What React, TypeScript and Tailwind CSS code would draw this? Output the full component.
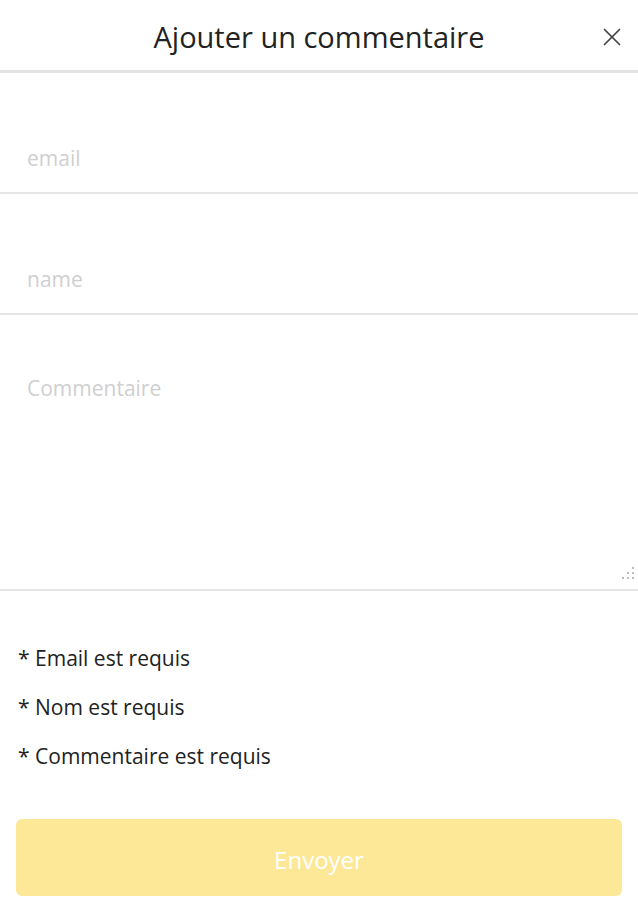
import React from 'react';
import { X } from 'lucide-react';

const App: React.FC = () => {
    return (
        <div className="w-[638px] h-[900px] bg-white text-[#222] font-['Open_Sans',sans-serif]">
            {/* Header */}
            <div className="h-[73px] flex items-center justify-center relative border-b-[3px] border-[#e3e3e3]">
                <h1 className="text-[29px] pt-[4px]">Ajouter un commentaire</h1>
                <button className="absolute right-[11px] top-[22px] text-[#444]">
                    <X size={30} strokeWidth={1.4} />
                </button>
            </div>

            {/* Fields */}
            <div className="flex flex-col">
                <input
                    placeholder="email"
                    className="h-[121px] pt-[50px] px-[27px] text-[21px] border-b-2 border-[#e6e6e6] outline-none placeholder:text-[#cfcfcf]"
                />
                <input
                    placeholder="name"
                    className="h-[121px] pt-[50px] px-[27px] text-[21px] border-b-2 border-[#e6e6e6] outline-none placeholder:text-[#cfcfcf]"
                />
                <div className="relative">
                    <textarea
                        placeholder="Commentaire"
                        className="block w-full h-[276px] pt-[58px] px-[27px] text-[21px] border-b-2 border-[#e6e6e6] outline-none placeholder:text-[#cfcfcf] resize-none"
                    />
                    {/* resize grip */}
                    <div className="absolute right-[4px] bottom-[12px] grid grid-cols-3 gap-[3px]">
                        <span className="w-[2px] h-[2px]" />
                        <span className="w-[2px] h-[2px]" />
                        <span className="w-[2px] h-[2px] bg-[#bbb]" />
                        <span className="w-[2px] h-[2px]" />
                        <span className="w-[2px] h-[2px] bg-[#bbb]" />
                        <span className="w-[2px] h-[2px] bg-[#bbb]" />
                        <span className="w-[2px] h-[2px] bg-[#bbb]" />
                        <span className="w-[2px] h-[2px] bg-[#bbb]" />
                        <span className="w-[2px] h-[2px] bg-[#bbb]" />
                    </div>
                </div>
            </div>

            {/* Errors */}
            <div className="flex flex-col gap-[21px] px-[18px] pt-[53px] text-[21px] text-[#222]">
                <p className="leading-[28px]">* Email est requis</p>
                <p className="leading-[28px]">* Nom est requis</p>
                <p className="leading-[28px]">* Commentaire est requis</p>
            </div>

            {/* Submit */}
            <div className="px-[16px] pt-[49px]">
                <button disabled className="w-full h-[77px] rounded-[6px] bg-[#fde898] text-white text-[24px] pt-[4px]">
                    Envoyer
                </button>
            </div>
        </div>
    );
};

export default App;
